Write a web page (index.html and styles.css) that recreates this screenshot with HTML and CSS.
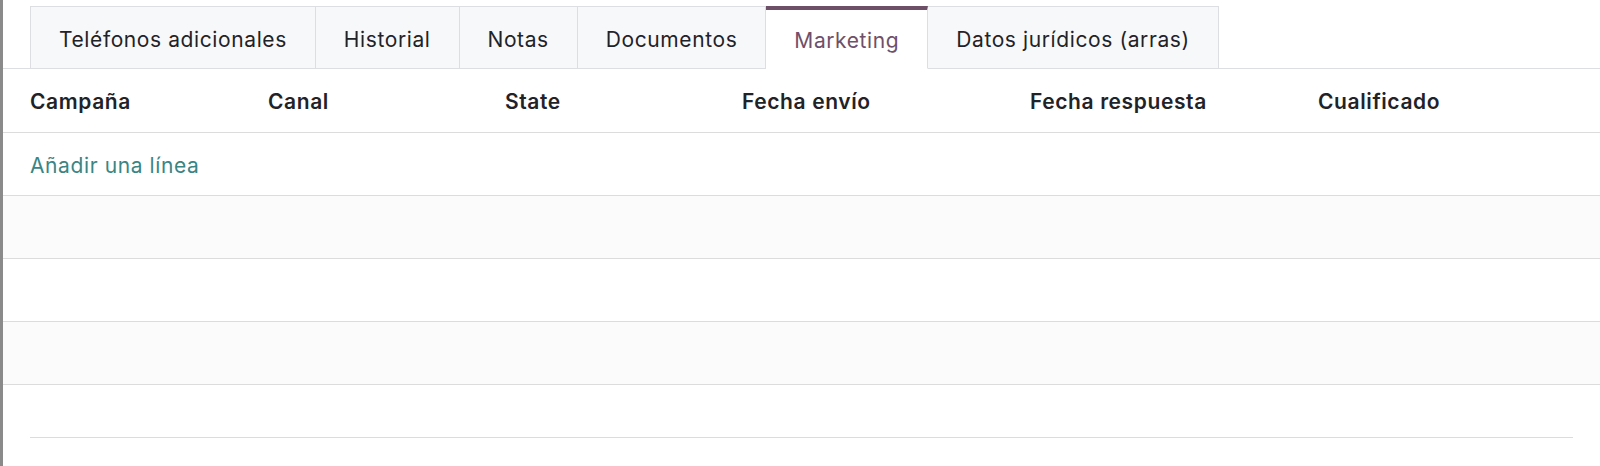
FILE: index.html
```html
<!DOCTYPE html>
<html lang="es">
  <head>
    <meta charset="utf-8" />
    <meta name="viewport" content="width=device-width, initial-scale=1" />
    <link rel="stylesheet" href="styles.css">
    <title>Marketing</title>
  </head>
  <body>
    <div class="sheet">
      <!-- Pestañas del formulario -->
      <ul class="form-tabs">
        <li class="form-tabs__item">Teléfonos adicionales</li>
        <li class="form-tabs__item">Historial</li>
        <li class="form-tabs__item">Notas</li>
        <li class="form-tabs__item">Documentos</li>
        <li class="form-tabs__item form-tabs__item--active">Marketing</li>
        <li class="form-tabs__item">Datos jurídicos (arras)</li>
      </ul>

      <!-- Lista de campañas -->
      <table class="o2m-list">
        <colgroup>
          <col style="width: 238px">
          <col style="width: 237px">
          <col style="width: 237px">
          <col style="width: 288px">
          <col style="width: 288px">
          <col>
        </colgroup>
        <thead>
          <tr>
            <th>Campaña</th>
            <th>Canal</th>
            <th>State</th>
            <th>Fecha envío</th>
            <th>Fecha respuesta</th>
            <th>Cualificado</th>
          </tr>
        </thead>
        <tbody>
          <tr class="o2m-list__add">
            <td colspan="6"><a href="#" class="o2m-list__link">Añadir una línea</a></td>
          </tr>
          <tr class="o2m-list__empty"><td colspan="6"></td></tr>
          <tr class="o2m-list__empty"><td colspan="6"></td></tr>
          <tr class="o2m-list__empty"><td colspan="6"></td></tr>
          <tr class="o2m-list__empty o2m-list__empty--last"><td colspan="6"></td></tr>
        </tbody>
      </table>

      <div class="o2m-footer"></div>
    </div>
  </body>
</html>
```

FILE: styles.css
```css
/* Estilos generales */
*, *::before, *::after {
  box-sizing: border-box;
}

html, body {
  margin: 0;
  padding: 0;
  height: 100%;
  background: #ffffff;
  font-family: 'Inter', 'Noto Sans', sans-serif;
  font-size: 21px;
  letter-spacing: 0.6px;
  color: #1f2328;
  -webkit-font-smoothing: antialiased;
  overflow: hidden;
}

/* Hoja del formulario con el borde gris a la izquierda */
.sheet {
  height: 100%;
  border-left: 3px solid #8a8a8a;
  padding-top: 6px;
}

/* Pestañas */
.form-tabs {
  display: flex;
  margin: 0;
  padding: 0 0 0 27px;
  list-style: none;
  border-bottom: 1px solid #dcdee1;
}

.form-tabs__item {
  height: 63px;
  margin-bottom: -1px;
  padding: 3px 28px 0;
  display: flex;
  align-items: center;
  background: #f7f8fa;
  border: 1px solid #dcdee1;
  border-left-width: 0;
  color: #1f2328;
  white-space: nowrap;
}

.form-tabs__item:first-child {
  border-left-width: 1px;
}

.form-tabs__item--active {
  background: #ffffff;
  color: #6f4f69;
  border-top: 4px solid #6d5068;
  border-bottom-color: #ffffff;
}

/* Tabla de líneas */
.o2m-list {
  width: 100%;
  border-collapse: collapse;
  table-layout: fixed;
}

.o2m-list th {
  height: 63px;
  padding: 3px 0 0 27px;
  text-align: left;
  font-weight: 600;
  border-bottom: 1px solid #dcdcdc;
}

.o2m-list td {
  height: 63px;
  padding: 0 0 0 27px;
  border-bottom: 1px solid #dcdcdc;
}

.o2m-list__add td {
  padding-top: 3px;
}

.o2m-list__empty:nth-child(even) td {
  background: #fbfbfb;
}

.o2m-list__empty--last td {
  height: 53px;
  border-bottom: 0;
}

.o2m-list__link {
  color: #3a8584;
  text-decoration: none;
}

.o2m-footer {
  margin: 0 27px;
  border-top: 1px solid #dcdcdc;
}
```
